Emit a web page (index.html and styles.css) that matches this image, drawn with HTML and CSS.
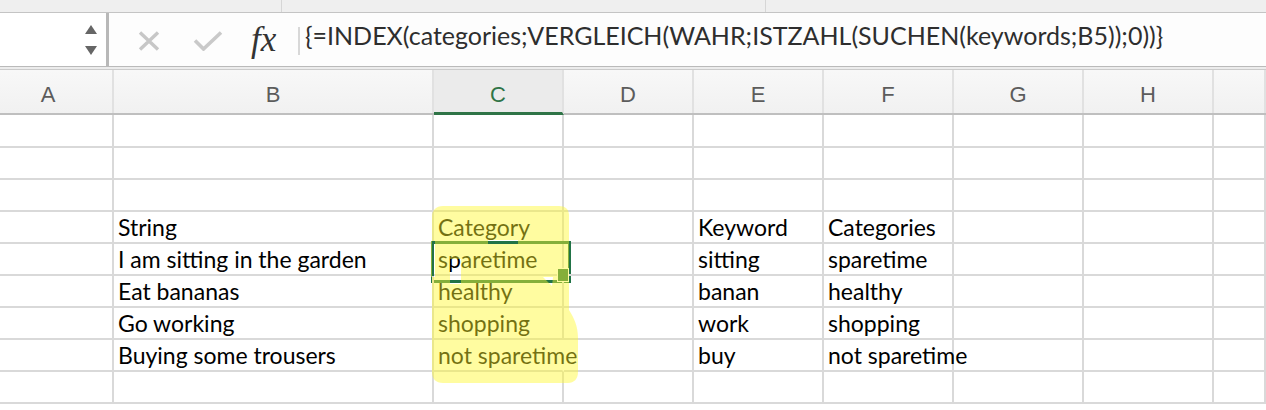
FILE: index.html
```html
<!DOCTYPE html>
<html lang="de">
<head>
<meta charset="utf-8">
<title>Excel – INDEX/VERGLEICH</title>
<link rel="stylesheet" href="styles.css">
</head>
<body>
<div class="ribbon-strip">
  <div class="rib-group g1"></div>
  <div class="rib-group g2"></div>
  <div class="rib-group g3"></div>
</div>

<div class="formula-bar">
  <div class="name-box">
    <div class="spinner"><span class="tri up"></span><span class="tri down"></span></div>
  </div>
  <svg class="ic-x" width="24" height="20" viewBox="0 0 24 20"><path d="M3 1.5 L21 18.5 M21 1.5 L3 18.5" stroke="#c7c7c7" stroke-width="3.4" fill="none"/></svg>
  <svg class="ic-check" width="30" height="21" viewBox="0 0 30 21"><path d="M2 10.5 L10.5 19 L28 2.5" stroke="#c9c9c9" stroke-width="3.6" fill="none"/></svg>
  <span class="fx">fx</span>
  <span class="fb-sep"></span>
  <div class="formula">{=INDEX(categories;VERGLEICH(WAHR;ISTZAHL(SUCHEN(keywords;B5));0))}</div>
</div>
<div class="bar-divider"></div>

<div class="col-headers">
  <div class="h h-a">A</div>
  <div class="h">B</div>
  <div class="h h-sel">C</div>
  <div class="h">D</div>
  <div class="h">E</div>
  <div class="h">F</div>
  <div class="h">G</div>
  <div class="h">H</div>
  <div class="h"></div>
</div>

<div class="grid">
  <div class="c"></div><div class="c"></div><div class="c"></div><div class="c"></div><div class="c"></div><div class="c"></div><div class="c"></div><div class="c"></div><div class="c"></div>
  <div class="c"></div><div class="c"></div><div class="c"></div><div class="c"></div><div class="c"></div><div class="c"></div><div class="c"></div><div class="c"></div><div class="c"></div>
  <div class="c"></div><div class="c"></div><div class="c"></div><div class="c"></div><div class="c"></div><div class="c"></div><div class="c"></div><div class="c"></div><div class="c"></div>

  <div class="c"></div><div class="c">String</div><div class="c">Category</div><div class="c"></div><div class="c">Keyword</div><div class="c">Categories</div><div class="c"></div><div class="c"></div><div class="c"></div>
  <div class="c"></div><div class="c">I am sitting in the garden</div><div class="c selected">sparetime<span class="fill-handle"></span></div><div class="c"></div><div class="c">sitting</div><div class="c">sparetime</div><div class="c"></div><div class="c"></div><div class="c"></div>
  <div class="c"></div><div class="c">Eat bananas</div><div class="c">healthy</div><div class="c"></div><div class="c">banan</div><div class="c">healthy</div><div class="c"></div><div class="c"></div><div class="c"></div>
  <div class="c"></div><div class="c">Go working</div><div class="c">shopping</div><div class="c"></div><div class="c">work</div><div class="c">shopping</div><div class="c"></div><div class="c"></div><div class="c"></div>
  <div class="c"></div><div class="c">Buying some trousers</div><div class="c ovf">not sparetime</div><div class="c"></div><div class="c">buy</div><div class="c">not sparetime</div><div class="c"></div><div class="c"></div><div class="c"></div>

  <div class="c"></div><div class="c"></div><div class="c"></div><div class="c"></div><div class="c"></div><div class="c"></div><div class="c"></div><div class="c"></div><div class="c"></div>
</div>

<svg class="marker" width="1266" height="410" viewBox="0 0 1266 410">
  <path fill-rule="evenodd" fill="rgba(255,248,45,0.45)" d="
    M 443 206 C 436 206 432 210 432 217 L 432 372 C 432 379 436 383 443 383
    L 568 383 C 574 383 578 379 578 372 L 578 338 C 578 326 574 318 569 310
    L 569 215 C 569 209 565 206 559 206 Z
    M 431 241 L 435 241 L 435 277 L 431 277 Z
    M 488 240 L 518 240 L 518 244 L 488 244 Z
    M 450 259 L 461 259 L 461 284 L 450 284 Z
    M 543 277 L 553 277 L 552 286 Z"/>
</svg>
</body>
</html>
```

FILE: styles.css
```css
* {
  box-sizing: border-box;
  margin: 0;
  padding: 0;
}

html, body {
  width: 1266px;
  height: 410px;
  overflow: hidden;
  background: #ffffff;
}

body {
  position: relative;
  font-family: Lato, "Liberation Sans", sans-serif;
  color: #000;
}

/* ---------- ribbon remnant at the top ---------- */
.ribbon-strip {
  height: 13px;
  display: flex;
  background: #efefef;
  border-bottom: 1px solid #c4c4c4;
}

.rib-group {
  height: 12px;
  border-right: 1px solid #d6d6d6;
}

.g1 { width: 282px; }
.g2 { width: 484px; }
.g3 { flex: 1; border-right: none; }

/* ---------- formula bar ---------- */
.formula-bar {
  height: 53px;
  display: flex;
  align-items: center;
  background: #fdfdfd;
}

.name-box {
  width: 109px;
  height: 100%;
  background: #fff;
  border-right: 3px solid #b8b8b8;
  display: flex;
  justify-content: flex-end;
  align-items: center;
  padding-right: 9px;
}

.spinner {
  display: flex;
  flex-direction: column;
  gap: 12px;
}

.tri {
  width: 0;
  height: 0;
  border-left: 6px solid transparent;
  border-right: 6px solid transparent;
}

.tri.up { border-bottom: 9px solid #666; }
.tri.down { border-top: 9px solid #666; }

.ic-x { margin-left: 28px; flex: none; margin-top: 2px; }
.ic-check { margin-left: 32px; flex: none; margin-top: 2px; }

.fx {
  margin-left: 28px;
  width: 31px;
  flex: none;
  font-family: "Liberation Serif", serif;
  font-style: italic;
  font-size: 35px;
  line-height: 34px;
  color: #333;
  margin-top: 0;
}

.fb-sep {
  margin-left: 16px;
  width: 2px;
  height: 28px;
  background: #d8d8d8;
  flex: none;
  margin-top: 2px;
}

.formula {
  align-self: flex-start;
  padding-left: 5px;
  font-size: 25px;
  line-height: 44px;
  color: #2e2e2e;
  white-space: nowrap;
}

.bar-divider {
  height: 4px;
  background: #ececec;
  border-top: 1px solid #bababa;
  border-bottom: 1px solid #cbcbcb;
}

/* ---------- column headers ---------- */
.col-headers {
  display: grid;
  grid-template-columns: 114px 320px repeat(6, 130px) 52px;
  height: 45px;
  background: linear-gradient(#f8f8f8, #f1f1f1);
  border-bottom: 2px solid #bfbfbf;
}

.h {
  border-right: 2px solid #e1e1e1;
  text-align: center;
  padding-top: 10px;
  font-family: "Liberation Sans", sans-serif;
  font-size: 22px;
  line-height: 30px;
  color: #5c5c5c;
}

.h-a { padding-right: 16px; }

.h-sel {
  background: #ebebeb;
  color: #2f7447;
  margin-bottom: -2px;
  border-bottom: 3px solid #2f7447;
}

/* ---------- cell grid ---------- */
.grid {
  display: grid;
  grid-template-columns: 114px 320px repeat(6, 130px) 52px;
  grid-template-rows: 33px repeat(8, 32px);
}

.c {
  position: relative;
  border-right: 2px solid #d9d9d9;
  border-bottom: 2px solid #d9d9d9;
  padding-left: 4px;
  font-size: 23px;
  line-height: 30px;
  white-space: nowrap;
  overflow: visible;
}

.c.ovf {
  border-right-color: transparent;
}

.c.selected::after {
  content: "";
  position: absolute;
  left: -3px;
  top: -3px;
  width: 134px;
  height: 36px;
  border: 3px solid #217346;
}

.fill-handle {
  position: absolute;
  left: 123px;
  top: 24px;
  width: 12px;
  height: 14px;
  background: #217346;
  border: 1px solid #fff;
  z-index: 1;
}

/* ---------- marker highlight drawn over the sheet ---------- */
.marker {
  position: absolute;
  left: 0;
  top: 0;
  z-index: 2;
  pointer-events: none;
}
```
